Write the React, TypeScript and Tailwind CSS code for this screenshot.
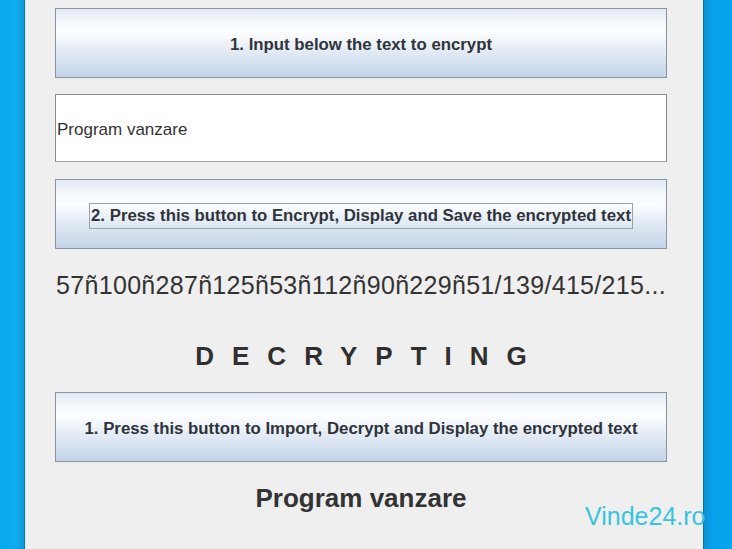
import React from "react";

const font = { fontFamily: '"Liberation Sans", Arial, sans-serif' };

// Botón con el degradado típico de Swing en Windows
const SwingButton = ({ children, focused }: { children: React.ReactNode; focused?: boolean }) => (
  <button
    className="w-full h-[70px] flex items-center justify-center pt-[3px] border border-[#8a95a1] bg-[linear-gradient(to_bottom,#e1e9f3_0%,#f7fafd_22%,#fbfdff_36%,#e3ebf5_62%,#c3d3e8_100%)] text-[#30343a] font-bold text-[16.8px] whitespace-nowrap"
  >
    {focused ? (
      <span className="border border-[#9aa3ad] px-[1px] leading-[24px]">{children}</span>
    ) : (
      children
    )}
  </button>
);

const App = () => {
  return (
    <div className="relative flex w-[732px] h-[549px] overflow-hidden bg-[#efefef]" style={font}>
      {/* Borde izquierdo de la ventana */}
      <div className="flex shrink-0">
        <div className="w-[24px] h-full bg-[linear-gradient(to_right,#08a9f0,#10acee_70%,#0c98d6)]" />
        <div className="w-[1px] h-full bg-[#1b6f94]" />
        <div className="w-[2px] h-full bg-[#dfeef6]" />
      </div>

      {/* Contenido */}
      <div className="flex-1 flex flex-col pt-[8px] pl-[28px] pr-[34px] bg-[#efefef]">
        <SwingButton>1. Input below the text to encrypt</SwingButton>

        <div className="mt-[16px] h-[68px] flex items-center pt-[3px] bg-white border border-[#8b8b8b] border-b-[#a0a0a0] pl-[1px] text-[17px] text-[#333]">
          Program vanzare
        </div>

        <div className="mt-[17px]">
          <SwingButton focused>2. Press this button to Encrypt, Display and Save the encrypted text</SwingButton>
        </div>

        <div className="mt-[21px] h-[30px] leading-[30px] text-center whitespace-nowrap text-[25px] tracking-[0.3px] text-[#333]">
          57ñ100ñ287ñ125ñ53ñ112ñ90ñ229ñ51/139/415/215...
        </div>

        <div className="mt-[41px] h-[30px] leading-[30px] text-center font-bold text-[26px] tracking-[18px] pl-[18px] text-[#2f2f2f]">
          DECRYPTING
        </div>

        <div className="mt-[21px]">
          <SwingButton>1. Press this button to Import, Decrypt and Display the encrypted text</SwingButton>
        </div>

        <div className="mt-[21px] h-[30px] leading-[30px] text-center font-bold text-[26px] text-[#333]">
          Program vanzare
        </div>
      </div>

      {/* Borde derecho de la ventana */}
      <div className="flex shrink-0">
        <div className="w-[2px] h-full bg-[#e4eff5]" />
        <div className="w-[1px] h-full bg-[#1a6d92]" />
        <div className="w-[28px] h-full bg-[linear-gradient(to_right,#0c92d4,#08a0ea_30%,#06a6ee)]" />
      </div>

      {/* Marca de agua */}
      <div className="absolute left-[585px] top-[501px] text-[25px] leading-[30px] text-[#38c4de]">
        Vinde24.ro
      </div>
    </div>
  );
};

export default App;
